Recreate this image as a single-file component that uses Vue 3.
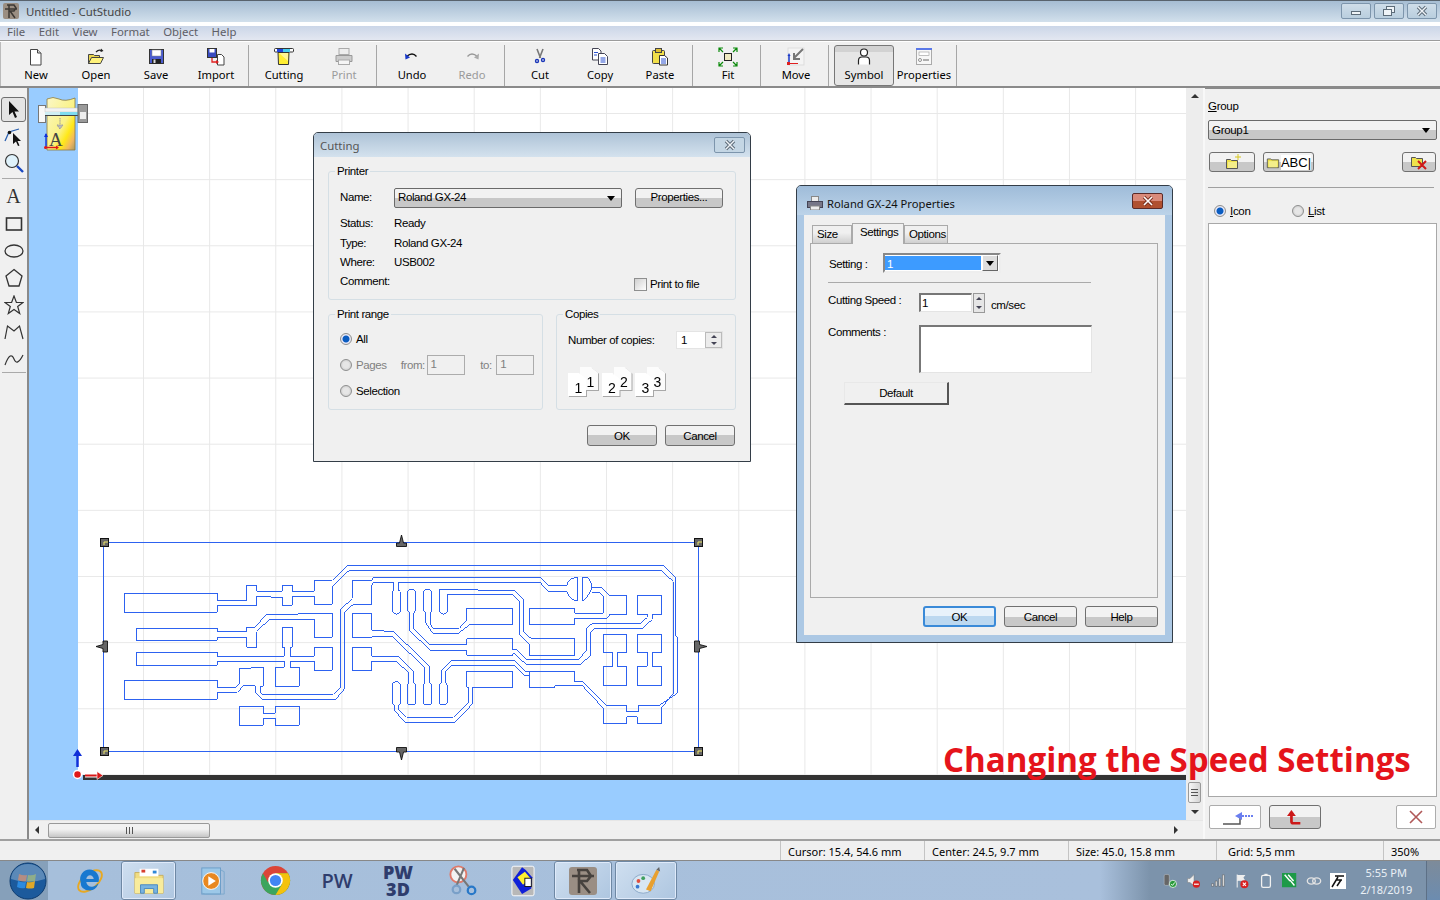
<script setup>
const menus = ["File", "Edit", "View", "Format", "Object", "Help"];

const toolGroups = [
  [{ id: "new", label: "New" }, { id: "open", label: "Open" }, { id: "save", label: "Save" }, { id: "import", label: "Import" }],
  [{ id: "cutting", label: "Cutting" }, { id: "print", label: "Print", off: true }],
  [{ id: "undo", label: "Undo" }, { id: "redo", label: "Redo", off: true }],
  [{ id: "cut", label: "Cut" }, { id: "copy", label: "Copy" }, { id: "paste", label: "Paste" }],
  [{ id: "fit", label: "Fit" }],
  [{ id: "move", label: "Move" }],
  [{ id: "symbol", label: "Symbol", active: true }, { id: "props", label: "Properties" }],
];

const icons = {
  new: '<path d="M4.5 2.5h7l3.500 3.500v12h-10.500z" fill="#fff" stroke="#444"/><path d="M11.5 2.500v3.500h3.500" fill="#ddd" stroke="#444"/>',
  open: '<path d="M2.5 16.5v-9h5l1 1h5v8z" fill="#e8d44c" stroke="#444"/><path d="M2.5 16.5l3-6h12l-3 6z" fill="#fff27a" stroke="#444"/><path d="M10 5q3-3 6-1" fill="none" stroke="#222" stroke-width="1.3"/><path d="M15 1.5l2.5 2.5-3 1z" fill="#222"/>',
  save: '<rect x="3.5" y="2.5" width="14" height="14" fill="#4a5cd0" stroke="#333"/><rect x="6" y="3" width="9" height="6" fill="#fff" stroke="#888" stroke-width=".5"/><rect x="6" y="12" width="9" height="4.5" fill="#222"/><rect x="7.5" y="12.5" width="2" height="3.5" fill="#ddd"/>',
  import: '<rect x="1.5" y="1.5" width="9" height="9" fill="#3a4cc0" stroke="#333"/><rect x="3.5" y="2" width="5" height="3.5" fill="#fff"/><path d="M11.5 7.5h4l2.5 2.5v8h-6.500z" fill="#fff" stroke="#444"/><path d="M6 11v4h5" fill="none" stroke="#e02020" stroke-width="1.300"/><path d="M10 13l3 2-3 2z" fill="#e02020"/>',
  cutting: '<path d="M4 5.500h11l-.5 12h-10z" fill="#ffee33" stroke="#333"/><path d="M5 6l9 8V6z" fill="#fff9c0" opacity=".7"/><rect x="0.500" y="1.500" width="19" height="3.500" rx="1" fill="#fff" stroke="#333"/><rect x="3" y="2" width="13" height="3" fill="#2244dd"/><rect x="9" y="2" width="7" height="3" fill="#44ccee"/>',
  print: '<rect x="5" y="1.500" width="10" height="6" fill="#eee" stroke="#aaa"/><path d="M2 8.500h16v6H2z" fill="#ccc" stroke="#999"/><rect x="4.500" y="13" width="11" height="4.500" fill="#f5f5f5" stroke="#aaa"/>',
  undo: '<path d="M4.500 9.500q6-5 10 0" fill="none" stroke="#111" stroke-width="1.300"/><path d="M3 6.500l.5 6 4.500-2z" fill="#1838c8"/>',
  redo: '<path d="M15.500 9.500q-6-5-10 0" fill="none" stroke="#999" stroke-width="1.300"/><path d="M17 6.500l-.5 6-4.500-2z" fill="#aaa"/>',
  cut: '<path d="M7 2l3.500 9M13 2l-3.500 9" stroke="#777" stroke-width="1.600"/><circle cx="7" cy="14" r="2.200" fill="#1a36b8"/><circle cx="13" cy="13" r="2.200" fill="#1a36b8"/><circle cx="7" cy="14" r=".8" fill="#fff"/><circle cx="13" cy="13" r=".8" fill="#fff"/>',
  copy: '<path d="M2.500 1.500h6l2.500 2.500v9h-8.500z" fill="#fff" stroke="#445"/><path d="M8.500 6.500h6l3 3v8h-9z" fill="#fff" stroke="#445"/><path d="M4 5.500h4M4 8h3M10.500 11h5M10.500 13h5M10.500 15h5" stroke="#2a50d0"/>',
  paste: '<rect x="2.500" y="3.500" width="12" height="13" rx="1" fill="#f2e04a" stroke="#444"/><rect x="5.500" y="1.500" width="6" height="4" fill="#e0c030" stroke="#444"/><path d="M9.500 8.500h5l3 2.500v7h-8z" fill="#fff" stroke="#333"/><path d="M11 12h5M11 14h5M11 16h5" stroke="#2a50d0"/>',
  fit: '<rect x="6.500" y="6.500" width="7" height="7" fill="#efe9c0" stroke="#222"/><g fill="none" stroke="#0a8a0a" stroke-width="1.200"><path d="M1 5V1h4M1 1l4 4M19 5V1h-4M19 1l-4 4M1 15v4h4M1 19l4-4M19 15v4h-4M19 19l-4-4"/></g>',
  move: '<rect x="2" y="1" width="16" height="17" fill="#f4f4f4" stroke="#ddd"/><path d="M17 2L8 11M8 6v6h6" fill="none" stroke="#777" stroke-width="2"/><path d="M3 8v7" stroke="#1838c8" stroke-width="1.500"/><path d="M1.500 9L3 6l1.500 3z" fill="#1838c8"/><rect x="1" y="15" width="3" height="3" fill="#e02020"/><path d="M4 16.500h8" stroke="#e02020"/>',
  symbol: '<circle cx="10" cy="5.500" r="3.500" fill="#fff" stroke="#222" stroke-width="1.200"/><path d="M4.500 17.500v-4q0-3.500 3.500-3.500h4q3.500 0 3.500 3.500v4" fill="#fff" stroke="#222" stroke-width="1.200"/>',
  props: '<rect x="2.500" y="1.500" width="15" height="16" fill="#f7f7f7" stroke="#aaa"/><rect x="2" y="1" width="16" height="2" fill="#5a78e8"/><rect x="5" y="5" width="10" height="3.500" fill="#fff" stroke="#999" stroke-width=".6"/><circle cx="6" cy="13" r="1.500" fill="#fff" stroke="#666" stroke-width=".7"/><path d="M9 13h6" stroke="#666"/>',
  arrow: '<path d="M5 1v14l3.500-3 2.500 6 2-1-2.500-5.500H15z" fill="#111"/>',
  node: '<path d="M1 15L5 6l10-3" fill="none" stroke="#2a60b0" stroke-width="1.300"/><circle cx="5.500" cy="6.500" r="1.800" fill="#111"/><path d="M9 7v11l3-2.500 2 4.500 1.500-.5-2-4.500h3.500z" fill="#111"/>',
  zoom: '<circle cx="8" cy="8" r="6.500" fill="#dff2fb" stroke="#333" stroke-width="1.200"/><path d="M13 13l6 6" stroke="#1a48c0" stroke-width="2.400"/>',
  rect: '<rect x="2.500" y="4" width="15" height="12" fill="none" stroke="#333" stroke-width="1.600"/>',
  ellipse: '<ellipse cx="10" cy="10" rx="9" ry="6" fill="none" stroke="#333" stroke-width="1.300"/>',
  pentagon: '<path d="M10 1.500l8 6.500-3 10H5L2 8z" fill="none" stroke="#333" stroke-width="1.300"/>',
  star: '<path d="M10 1l2.400 6.500h6.600l-5.300 4 2 7L10 14.500 4.300 18.500l2-7-5.300-4h6.600z" fill="none" stroke="#333" stroke-width="1.200"/>',
  poly: '<path d="M1 17L3.500 4l6.500 5 5.500-5L19 17" fill="none" stroke="#333" stroke-width="1.200"/>',
  curve: '<path d="M1 16C5 5 8 5 10 10s5 4 9-4" fill="none" stroke="#333" stroke-width="1.200"/>',
};

const drawTools = ["arrow", "node", "zoom", "sep", "text", "rect", "ellipse", "pentagon", "star", "poly", "curve"];

const pcbLeft = [
  "M712 151H658V184H592V166H562V184H485V166H455V211H367V190H88V247H367V226H485V199H525L527 202H562V226H592V199H658V223H712V169L745 136L763 121H885",
  "M712 151L757 106H885",
  "M367 295H124V331H367V322H455V352H485V305L523 268H658V322H712V250H612L610 253H514L480 292H455V304H367Z",
  "M562 292H592V352H586V379H658V352H712V421H658V394H586V412H613V469H541V412H568V394H367V406H124V367H367V379H568V352H562Z",
  "M885 142H836L830 151H772V205L736 240V472L715 493H502L497 487V469H505V412H469V415H433V462L423 472H367V451H88V508H367V487H427L445 468H481V487L502 508H722L750 475V245L775 223H830V166L836 157H885",
  "M772 250H830V301H864L868 304H885M772 250V322H830L836 319H885",
  "M772 352H830V379H885M772 352V421H830V394H885",
  "M433 529H505V550H541V529H613V586H541V565H505V586H433Z",
];

const pcbRight = [
  "M0 106H820L858 143V318L862 320V490L808 526H745V545H710V526H648L578 455H555V424H418V472H495V468H578L640 535V580H710V560H742V580H815V533L850 490V155L815 122H0",
  "M0 142H450L478 168H530Q531 145 563 142V212Q540 212 530 185H475L450 157H25V180L31 185V245Q19 260 7 245V185L10 180V157H0",
  "M577 142H590Q605 150 605 175Q590 210 577 212Z",
  "M605 172H635L658 196H710V253H660L650 265H555V283H418V235H555V250H640V198L628 187H605",
  "M150 178H262L265 181H372L400 208V305L425 327H555V376H418V343L388 312V215L370 195H172V245Q160 260 148 245V185Z",
  "M100 185Q112 170 125 185V240L122 248V285L130 295H208L230 270V235H368V283H240L205 310H128L108 280V248L100 240Z",
  "M52 185Q65 170 78 185V240L72 248V297L120 345H230V327H368V360H380L410 390H565L590 360V295L605 282H678L680 280H752L772 262V253H742V196H815V253H787V268L757 296H612L603 305V375L572 403H408L375 372H368V376H230V361H120L58 300V248L52 240Z",
  "M0 379H25L72 425V458L78 465V520Q65 530 52 520V465L57 458V430L20 394H0",
  "M0 304H10L118 408V458L125 465V520Q112 530 100 520V465L105 458V415L8 319H0",
  "M418 424H405L375 393H183L155 422V458L148 465V520Q160 530 172 520V465L167 458V425L183 408H375L405 438H418",
  "M7 462V520L13 527V541L45 577H195L247 522V472H368V424H230V472H235V517L190 562H50L25 537V527L31 520V462Q19 448 7 462Z",
  "M640 313H710V367H682V409H710V466H640V409H668V367H640Z",
  "M742 313H815V367H787V409H815V466H742V409H772V367H742Z",
];

const handles = [[100, 538], [694, 538], [100, 747], [694, 747]];

const statusCells = [
  { text: "Cursor: 15.4, 54.6 mm", width: 144 },
  { text: "Center: 24.5, 9.7 mm", width: 144 },
  { text: "Size: 45.0, 15.8 mm", width: 148 },
  { text: "Grid: 5,5 mm", width: 167 },
  { text: "350%", width: 57 },
];

const copyPages = [1, 2, 3];
</script>

<template>
  <div class="screen">
    <header class="titlebar">
      <svg class="app-icon" viewBox="0 0 16 16"><rect width="16" height="16" rx="2" fill="#9a8e82" /><path d="M4 2h7l2 3-2 3H7l5 7M6 2v13M2 6h12" fill="none" stroke="#3c3834" stroke-width="1.500" /></svg>
      <span class="title-text">Untitled - CutStudio</span>
      <div class="win-btns">
        <span class="win-btn"><i class="glyph-min"></i></span>
        <span class="win-btn">
          <svg viewBox="0 0 14 12"><rect x="4.500" y="1.500" width="8" height="6" fill="#eef3f7" stroke="#5d6c79" /><rect x="1.500" y="4.500" width="8" height="6" fill="#eef3f7" stroke="#5d6c79" /></svg>
        </span>
        <span class="win-btn">
          <svg viewBox="0 0 14 12"><path d="M3 2l8 8M11 2l-8 8" stroke="#5d6c79" stroke-width="3.400" /><path d="M3 2l8 8M11 2l-8 8" stroke="#f0f4f8" stroke-width="1.400" /></svg>
        </span>
      </div>
    </header>
    <nav class="menubar">
      <span v-for="m in menus" :key="m">{{ m }}</span>
    </nav>
    <div class="toolbar">
      <div v-for="(group, i) in toolGroups" :key="i" class="tool-group">
        <div v-for="t in group" :key="t.id" class="tool" :class="{ active: t.active, off: t.off }">
          <svg class="tool-icon" viewBox="0 0 20 20" v-html="icons[t.id]"></svg>
          <span>{{ t.label }}</span>
        </div>
      </div>
    </div>

    <main class="workspace">
      <aside class="drawbar">
        <template v-for="d in drawTools" :key="d">
          <div v-if="d === 'sep'" class="draw-sep"></div>
          <div v-else class="draw-tool" :class="{ active: d === 'arrow' }">
            <span v-if="d === 'text'" class="draw-a">A</span>
            <svg v-else viewBox="0 0 20 20" v-html="icons[d]"></svg>
          </div>
        </template>
        <div class="draw-sep last"></div>
      </aside>

      <section class="canvas-col">
        <div class="canvas-row">
          <div class="canvas">
            <div class="paper"></div>
            <svg class="pcb" viewBox="0 0 1157 733">
              <g transform="translate(-29 -88)">
                <g shape-rendering="crispEdges">
                  <path d="M103.500 542.500H698.500V751.500H103.500Z" fill="none" stroke="#2d62f0" />
                  <g transform="translate(95 530) scale(.33333)" fill="none" stroke="#2d62f0" stroke-width="3">
                    <path v-for="(d, i) in pcbLeft" :key="i" :d="d" />
                  </g>
                  <g transform="translate(390 530) scale(.33333)" fill="none" stroke="#2d62f0" stroke-width="3">
                    <path v-for="(d, i) in pcbRight" :key="i" :d="d" />
                  </g>
                </g>
                <g v-for="h in handles" :key="h[0] + '-' + h[1]">
                  <rect :x="h[0] + .5" :y="h[1] + .5" width="8" height="8" fill="#666" stroke="#111" />
                  <path :d="`M${h[0] + 4} ${h[1] + 7}v-3h4`" fill="none" stroke="#f0e868" />
                </g>
                <path d="M401.500 535l-2 8h-3v3.500h10v-3.500h-3z" fill="#666" stroke="#111" stroke-width=".9" />
                <path d="M401.500 760l-2-8h-3v-4.500h10v4.500h-3z" fill="#666" stroke="#111" stroke-width=".9" />
                <path d="M96 646.500l7-2v-3.500h4.500v11h-4.500v-3.500z" fill="#666" stroke="#111" stroke-width=".9" />
                <path d="M707 646.500l-7.500-2v-3.500h-5v11h5v-3.500z" fill="#666" stroke="#111" stroke-width=".9" />
                <path d="M77.500 767v-14" stroke="#1030d8" stroke-width="2.500" />
                <path d="M73 756l4.500-7 4.500 7z" fill="#1030d8" />
                <circle cx="77.500" cy="774.500" r="4" fill="#e01818" stroke="#fff" stroke-width="1.500" />
                <path d="M85 775.500h13" stroke="#fff" stroke-width="4" />
                <path d="M85 775.500h13" stroke="#d81818" stroke-width="2" />
                <path d="M97 771.500l6 4-6 4z" fill="#d81818" stroke="#fff" stroke-width=".6" />
              </g>
            </svg>
            <svg class="plotter" viewBox="0 0 50 54">
              <defs>
                <linearGradient id="sheetFill" x1="0" y1="0" x2="1" y2="1">
                  <stop offset="0" stop-color="#fbf7c8" />
                  <stop offset=".55" stop-color="#faf286" />
                  <stop offset=".72" stop-color="#ffe818" />
                  <stop offset=".86" stop-color="#f2b860" />
                  <stop offset="1" stop-color="#a89860" />
                </linearGradient>
              </defs>
              <path d="M9 2q6-3 12 0t16-1v52H9z" fill="url(#sheetFill)" stroke="#8a7a40" stroke-width=".8" />
              <rect x="0.500" y="8.500" width="7" height="17" fill="#f8f8f8" stroke="#777" />
              <rect x="7" y="11" width="33" height="4" fill="#f2f2f2" stroke="#bbb" stroke-width=".4" />
              <rect x="22" y="15" width="18" height="3" fill="#7fdcf0" />
              <rect x="7" y="15" width="15" height="3" fill="#cfeef4" />
              <rect x="7" y="18" width="33" height="1" fill="#444" />
              <rect x="40" y="7.500" width="9.500" height="18" fill="#9a9a9a" stroke="#666" />
              <rect x="42" y="15" width="6" height="7" fill="#eee" />
              <path d="M22 21v6M19 28h6l-3 4z" fill="#bbb" stroke="#999" stroke-dasharray="1.500 .7" />
              <path d="M8 37v14" stroke="#1030d8" stroke-width="1.400" />
              <path d="M6 40l2-4 2 4z" fill="#1030d8" />
              <path d="M7 50.500h13" stroke="#e01818" stroke-width="1.500" />
              <circle cx="7.500" cy="50.500" r="1.500" fill="#e01818" />
              <path d="M18 48.500l3 2-3 2z" fill="#e01818" />
            </svg>
            <span class="plotter-a">A</span>
          </div>
          <div class="vscroll">
            <span class="arr-up"></span>
            <span class="vthumb"><i></i></span>
            <span class="arr-down"></span>
          </div>
        </div>
        <div class="hscroll">
          <span class="arr-left"></span>
          <span class="hthumb"><i></i></span>
          <span class="arr-right"></span>
        </div>
      </section>

      <aside class="sidepanel">
        <label class="side-label"><u>G</u>roup</label>
        <div class="aero-select side-select"><span>Group1</span><b class="caret"></b></div>
        <div class="side-btns">
          <button class="aero-btn sb-new">
            <svg viewBox="0 0 16 16"><path d="M1.500 5.500h4l1 1h6v8h-11z" fill="#efe24a" stroke="#555" /><path d="M3 8h9v6H3z" fill="#f4ee8a" /><path d="M13 0v6M10 3h6" stroke="#d8c820" /></svg>
          </button>
          <button class="aero-btn sb-rename">
            <svg viewBox="0 0 16 16"><path d="M1.500 4.500h4l1 1h8v9h-13z" fill="#efe24a" stroke="#555" /><path d="M3 7h10v7H3z" fill="#f4ee8a" /></svg>
            <span class="abc">ABC|</span>
          </button>
          <button class="aero-btn sb-del">
            <svg viewBox="0 0 18 16"><path d="M1.500 3.500h4l1 1h6v8h-11z" fill="#efe24a" stroke="#555" /><path d="M8 7l8 8M16 7l-8 8" stroke="#d01818" stroke-width="2" /></svg>
          </button>
        </div>
        <hr class="side-line" />
        <div class="side-radios">
          <span class="radio-row icon-opt"><i class="radio on"></i><span><u>I</u>con</span></span>
          <span class="radio-row"><i class="radio"></i><span><u>L</u>ist</span></span>
        </div>
        <div class="symbol-list"></div>
        <div class="side-foot">
          <button class="flat-btn">
            <svg viewBox="0 0 40 16"><path d="M8 15h17V7" fill="none" stroke="#555" stroke-width="1.500" /><path d="M20 7l7-4v8z" fill="#6a7ef0" /><path d="M27 7h11" stroke="#6a7ef0" stroke-width="2" stroke-dasharray="2 1" /></svg>
          </button>
          <button class="aero-btn foot-up">
            <svg viewBox="0 0 20 18"><path d="M6 8v6q0 2 2 2h8" fill="none" stroke="#cc1818" stroke-width="3" /><path d="M1 8l5-7 5 7z" fill="#cc1818" /></svg>
          </button>
          <button class="flat-btn foot-x">
            <svg viewBox="0 0 14 14"><path d="M1 1l12 12M13 1L1 13" stroke="#b05858" stroke-width="1.600" /></svg>
          </button>
        </div>
      </aside>
    </main>

    <footer class="statusbar">
      <span v-for="c in statusCells" :key="c.text" class="status-cell" :style="{ width: c.width + 'px' }">{{ c.text }}</span>
    </footer>

    <div class="taskbar">
      <svg class="orb" viewBox="0 0 38 38">
        <circle cx="19" cy="19" r="18" fill="#1c5a9c" stroke="#0e3c70" />
        <path d="M10 12q4 2 8 1l-1 6q-4 1-8-1z" fill="#c0623a" />
        <path d="M19 13q4 1 8-1l-1 7q-4 1-8 0z" fill="#7a9c48" />
        <path d="M9 19q4 2 8 1l-1 6q-4 1-8-1z" fill="#2b8ae0" />
        <path d="M18 20q4 1 8-1l-1 7q-4 1-8 0z" fill="#e0a828" />
        <path d="M2 17a17 15 0 0 1 34 0q-17 6-34 0z" fill="#a8c4dc" opacity=".45" />
      </svg>
      <div class="task-slot ie">
        <svg viewBox="0 0 34 34"><ellipse cx="17" cy="17" rx="15" ry="8" transform="rotate(-40 17 17)" fill="none" stroke="#e8a820" stroke-width="2" /><path d="M7 18a10 10 0 1 1 19 0H13q1 5 6 5 4 0 6-3h1q-3 7-9 7-10 0-10-9zm6-3h8q-1-4-4-4t-4 4z" fill="#1878d0" /></svg>
      </div>
      <div class="task-slot active folder">
        <svg viewBox="0 0 34 34"><path d="M2 8h12l2 3h16v19H2z" fill="#f0dc82" stroke="#c8b060" /><rect x="7" y="4" width="20" height="8" fill="#fff" /><rect x="9" y="5" width="4" height="3" fill="#d84030" /><rect x="21" y="6" width="4" height="3" fill="#3088d8" /><path d="M2 14h30v16H2z" fill="#f8ec9c" /><path d="M8 30v-9h18v9h-4v-5H12v5z" fill="#78b4e0" stroke="#4a88c0" /></svg>
      </div>
      <div class="task-slot wmp">
        <svg viewBox="0 0 30 34"><rect x="3" y="3" width="20" height="28" fill="#9cc8e8" stroke="#6a9cc8" /><path d="M23 5l4 2v24h-20l-4-1" fill="none" stroke="#7aa8cc" /><circle cx="13" cy="17" r="9" fill="#e88820" stroke="#fff" /><path d="M10 12l8 5-8 5z" fill="#fff" /></svg>
      </div>
      <div class="task-slot chrome">
        <svg viewBox="0 0 32 32"><circle cx="16" cy="16" r="15" fill="#db4437" /><path d="M16 16L3 23.500A15 15 0 0 1 3 8.500L9.500 20z" fill="#3ba55d" /><path d="M3 23.500A15 15 0 0 0 16 31a15 15 0 0 0 13-22.500H16z" fill="#3ba55d" /><path d="M16 31a15 15 0 0 0 13-22.500H16l6.500 11.500z" fill="#f4c20d" /><circle cx="16" cy="16" r="7.500" fill="#fff" /><circle cx="16" cy="16" r="5.800" fill="#4285f4" /></svg>
      </div>
      <div class="task-slot pw"><span>PW</span></div>
      <div class="task-slot pw3d"><span>PW 3D</span></div>
      <div class="task-slot snip">
        <svg viewBox="0 0 34 34"><circle cx="11" cy="10" r="8.500" fill="#f2f2f2" stroke="#e07a6a" stroke-width="2" /><path d="M7 4l15 19M17 3L9 22" stroke="#777" stroke-width="2.200" /><circle cx="25" cy="27" r="4" fill="none" stroke="#2878c8" stroke-width="2.400" /><circle cx="9" cy="26" r="4" fill="none" stroke="#7aa0c8" stroke-width="2.400" /></svg>
      </div>
      <div class="task-slot cstudio">
        <svg viewBox="0 0 26 34"><rect x="1" y="1" width="24" height="32" rx="2" fill="#b8b8b8" stroke="#fff" /><path d="M2 16L12 2l4 3 7 8-1 12-10 6z" fill="#1020d8" /><path d="M7 13l8-6 6 7-8 7z" fill="#fff030" /><rect x="15" y="14" width="7" height="9" fill="#fff" stroke="#111" /></svg>
      </div>
      <div class="task-slot active rl">
        <svg viewBox="0 0 28 28"><rect width="28" height="28" rx="3" fill="#9a8e84" /><path d="M8 3h10l4 6-4 5h-7l10 12M10 3v23M3 9h22" fill="none" stroke="#47423e" stroke-width="2.600" /></svg>
      </div>
      <div class="task-slot active paint">
        <svg viewBox="0 0 34 34"><ellipse cx="14" cy="20" rx="12" ry="10" fill="#d8e6f2" stroke="#8aa8c8" /><circle cx="9" cy="17" r="2" fill="#e05040" /><circle cx="14" cy="14" r="2" fill="#40a060" /><circle cx="8" cy="23" r="2" fill="#3878d0" /><path d="M17 26L28 5l3 2-9 21z" fill="#e8a030" /><path d="M28 5l3-3 1 5z" fill="#666" /></svg>
      </div>

      <div class="tray">
        <svg viewBox="0 0 22 20" class="tray-i"><rect x="3" y="1" width="7" height="15" rx="2" fill="#666" stroke="#ddd" stroke-width=".5" /><circle cx="15" cy="14" r="5" fill="#2a9a3a" stroke="#fff" /><path d="M12.500 14l2 2 3-4" fill="none" stroke="#fff" stroke-width="1.300" /></svg>
        <svg viewBox="0 0 20 20" class="tray-i"><path d="M2 7h3l5-5v14l-5-4H2z" fill="#eee" stroke="#777" stroke-width=".6" /><circle cx="13" cy="14" r="4.500" fill="#d82020" /><path d="M10 14h6" stroke="#fff" stroke-width="1.500" /></svg>
        <svg viewBox="0 0 18 18" class="tray-i"><path d="M2 15h2v-3H2zM6 15h2v-6H6zM10 15h2V6h-2zM14 15h2V2h-2z" fill="#eee" stroke="#555" stroke-width=".6" /></svg>
        <svg viewBox="0 0 18 20" class="tray-i"><path d="M3 2v16M3 3h9l-2 3 2 3H3" fill="#eee" stroke="#eee" stroke-width="1.300" /><circle cx="12" cy="14" r="5" fill="#d82020" /><path d="M10 12l4 4M14 12l-4 4" stroke="#fff" stroke-width="1.300" /></svg>
        <svg viewBox="0 0 14 20" class="tray-i"><rect x="1.500" y="3" width="11" height="15" rx="2" fill="none" stroke="#f0f0f0" stroke-width="1.600" /><rect x="5" y="1" width="4" height="2" fill="#f0f0f0" /></svg>
        <svg viewBox="0 0 18 18" class="tray-i"><rect width="16" height="16" fill="#1e9a48" /><path d="M3 2l6 7M7 2l6 7M9 8l5 6" stroke="#fff" stroke-width="1.600" /></svg>
        <svg viewBox="0 0 18 14" class="tray-i"><ellipse cx="6" cy="7" rx="4.500" ry="3.500" fill="none" stroke="#e4e4e4" stroke-width="1.500" /><ellipse cx="12" cy="7" rx="4.500" ry="3.500" fill="none" stroke="#e4e4e4" stroke-width="1.500" /></svg>
        <svg viewBox="0 0 16 16" class="tray-i"><rect width="16" height="16" fill="#fff" /><path d="M2 14L8 4M5 3h9M6 7h6M7 13l4-6" stroke="#111" stroke-width="1.500" /></svg>
      </div>
      <div class="clock"><span>5:55 PM</span><span>2/18/2019</span></div>
      <div class="show-desktop"></div>
    </div>

    <!-- floating windows -->
    <section class="dlg cutting">
      <div class="dlg-title">
        <span>Cutting</span>
        <span class="dlg-close">
          <svg viewBox="0 0 14 12"><path d="M3 2l8 8M11 2l-8 8" stroke="#5d6c79" stroke-width="3.400" /><path d="M3 2l8 8M11 2l-8 8" stroke="#f0f4f8" stroke-width="1.400" /></svg>
        </span>
      </div>
      <div class="dlg-body">
        <fieldset class="gbox printer-box">
          <legend>Printer</legend>
          <div class="info-row name-row">
            <span>Name:</span>
            <div class="aero-select name-select"><span>Roland GX-24</span><b class="caret"></b></div>
            <button class="aero-btn props-btn">Properties...</button>
          </div>
          <div class="info-row"><span>Status:</span><span>Ready</span></div>
          <div class="info-row"><span>Type:</span><span>Roland GX-24</span></div>
          <div class="info-row"><span>Where:</span><span>USB002</span></div>
          <div class="info-row comment-row">
            <span>Comment:</span>
            <span class="to-file"><i class="check"></i>Print to file</span>
          </div>
        </fieldset>
        <div class="box-row">
          <fieldset class="gbox range-box">
            <legend>Print range</legend>
            <div class="radio-row"><i class="radio on"></i><span>All</span></div>
            <div class="radio-row disabled pages-row">
              <i class="radio"></i><span class="pages-label">Pages</span>
              <span class="from">from:</span><span class="num-field">1</span>
              <span class="to">to:</span><span class="num-field">1</span>
            </div>
            <div class="radio-row"><i class="radio"></i><span>Selection</span></div>
          </fieldset>
          <fieldset class="gbox copies-box">
            <legend>Copies</legend>
            <div class="copies-row">
              <span>Number of copies:</span>
              <div class="spin-field"><span>1</span><i><b></b><b class="down"></b></i></div>
            </div>
            <div class="collate">
              <div v-for="n in copyPages" :key="n" class="page-pair">
                <span class="sheet back">{{ n }}</span>
                <span class="sheet front">{{ n }}</span>
              </div>
            </div>
          </fieldset>
        </div>
        <div class="dlg-actions">
          <button class="aero-btn">OK</button>
          <button class="aero-btn">Cancel</button>
        </div>
      </div>
    </section>

    <section class="dlg gx24">
      <div class="gx-title">
        <svg viewBox="0 0 16 14"><rect x="4.500" y="0.500" width="7" height="5" fill="#eee" stroke="#888" /><rect x="0.500" y="5.500" width="15" height="6" fill="#778" stroke="#445" /><rect x="3.500" y="10" width="9" height="4" fill="#eee" stroke="#888" /></svg>
        <span>Roland GX-24 Properties</span>
        <span class="gx-close">
          <svg viewBox="0 0 14 12"><path d="M3 2l8 8M11 2l-8 8" stroke="#7a3020" stroke-width="3.400" /><path d="M3 2l8 8M11 2l-8 8" stroke="#fff" stroke-width="1.600" /></svg>
        </span>
      </div>
      <div class="gx-body">
        <div class="tabs">
          <span class="tab tab-size">Size</span>
          <span class="tab current">Settings</span>
          <span class="tab tab-opts">Options</span>
        </div>
        <div class="tab-page">
          <div class="set-row">
            <span class="set-label">Setting :</span>
            <div class="combo"><span>1</span><b><i class="caret"></i></b></div>
          </div>
          <hr class="set-line" />
          <div class="speed-row">
            <span class="speed-label">Cutting Speed :</span>
            <span class="sunken speed-input">1</span>
            <span class="mini-spin"><b></b><b class="down"></b></span>
            <span class="unit">cm/sec</span>
          </div>
          <div class="comment-block">
            <span class="speed-label">Comments :</span>
            <span class="sunken comment-input"></span>
          </div>
          <button class="raised-btn">Default</button>
        </div>
        <div class="gx-actions">
          <button class="aero-btn focus">OK</button>
          <button class="aero-btn">Cancel</button>
          <button class="aero-btn">Help</button>
        </div>
      </div>
    </section>

    <div class="caption">Changing the Speed Settings</div>
  </div>
</template>

<style>
html, body { margin: 0; padding: 0; background: #f0f0f0; }
</style>

<style scoped>
* { box-sizing: border-box; }
.screen {
  position: relative; width: 1440px; height: 900px; overflow: hidden;
  display: flex; flex-direction: column; background: #f0f0f0;
  font-family: "Liberation Sans", Arial, sans-serif; font-size: 12px; color: #000;
}
button { font: inherit; color: inherit; letter-spacing: inherit; padding: 0; }

/* title + menu */
.titlebar {
  height: 22px; flex: none; display: flex; align-items: center; padding: 0 0 1px 3px;
  border-top: 1px solid #59636d;
  background: linear-gradient(#a6bdd3, #d2e0ec);
}
.app-icon { width: 16px; height: 16px; }
.title-text { margin-left: 7px; font-family: "Noto Sans", sans-serif; font-size: 11.400px; color: #444; }
.win-btns { margin-left: auto; display: flex; gap: 3px; padding-right: 3px; }
.win-btn {
  width: 30px; height: 16px; border: 1px solid #7d95ac; border-radius: 2px;
  background: linear-gradient(#cfdde9, #b9cede); display: flex; align-items: center; justify-content: center;
}
.win-btn svg, .dlg-close svg, .gx-close svg { width: 14px; height: 12px; }
.glyph-min { width: 10px; height: 4px; border: 1px solid #5d6c79; background: #eef3f7; margin-top: 3px; }
.menubar {
  height: 19px; flex: none; display: flex; gap: 13.500px; padding: 0 0 2px 7px; align-items: center;
  border-top: 4px solid #fff; border-bottom: 1px solid #9c9c9c;
  background: linear-gradient(#cbd6e8, #e3e7f1);
  font-family: "Noto Sans", sans-serif; font-size: 11.400px; line-height: 14px; color: #5e5e66;
}
.toolbar {
  height: 47px; flex: none; display: flex; padding: 3px 0 0 6px;
  background: #f0f0f0; border-bottom: 2px solid #8a8a8a; border-top: 1px solid #fff;
  box-shadow: inset 4px 0 0 -3px #bbb;
}
.tool-group { display: flex; height: 41px; padding-right: 2px; margin-right: 5px; border-right: 1px solid #a6a6a6; }
.tool {
  width: 60px; display: flex; flex-direction: column; align-items: center;
  font-family: "Noto Sans", sans-serif; font-size: 11.200px; line-height: 16px;
}
.tool-icon { width: 20px; height: 20px; margin: 2px 0 0; }
.tool.off { color: #9a9a9a; }
.tool.active {
  border: 1px solid #777; border-radius: 3px;
  background: linear-gradient(#d2d2d2 0 6px, #e6e6e6 6px);
}
.tool.active .tool-icon { margin-top: 1px; }

/* main */
.workspace { flex: 1; min-height: 0; display: flex; }
.drawbar {
  width: 29px; flex: none; padding: 9px 0 0; border-right: 2px solid #8a8a8a; background: #f0f0f0;
  display: flex; flex-direction: column; align-items: center;
}
.draw-tool { width: 25px; height: 27px; display: flex; align-items: center; justify-content: center; flex: none; }
.draw-tool svg { width: 20px; height: 20px; }
.draw-tool.active { height: 25px; border: 1px solid #6f6f6f; border-radius: 3px; background: #e4e4e4; }
.draw-a { font-family: "Liberation Serif", serif; font-size: 20px; color: #333; }
.draw-sep { width: 24px; height: 4px; margin: 2px 0 1px; border-top: 1px solid #aaa; flex: none; }
.draw-sep.last { margin-top: 0; }

.canvas-col { width: 1174px; flex: none; display: flex; flex-direction: column; }
.canvas-row { flex: 1; min-height: 0; display: flex; }
.canvas { position: relative; width: 1157px; overflow: hidden; background: #99ccff; }
.paper {
  margin-left: 49px; height: 687px; background-color: #fff;
  background-image: linear-gradient(#e8e8e8 1px, transparent 1px), linear-gradient(90deg, #e8e8e8 1px, transparent 1px);
  background-size: 66.150px 66.150px; background-position: 65px 25px;
  box-shadow: 5px 5px 0 #333;
}
.pcb { position: absolute; left: 0; top: 0; width: 1157px; height: 733px; }
.plotter { position: absolute; left: 9px; top: 9px; width: 50px; height: 54px; }
.plotter-a { position: absolute; left: 20px; top: 42px; font-family: "Liberation Serif", serif; font-size: 19px; line-height: 19px; color: #444; }
.vscroll { flex: 1; background: #ededed; display: flex; flex-direction: column; align-items: center; position: relative; }
.arr-up, .arr-down { width: 0; height: 0; border: 4px solid transparent; }
.arr-up { border-bottom: 4px solid #333; margin-top: 2px; }
.vthumb {
  margin-top: auto; width: 13px; height: 21px; border: 1px solid #999; border-radius: 2px;
  background: linear-gradient(90deg, #f6f6f6, #d4d4d4); display: flex; align-items: center; justify-content: center;
}
.vthumb i { width: 7px; height: 7px; border-top: 1px solid #555; border-bottom: 1px solid #555; background: linear-gradient(#555,#555) center/7px 1px no-repeat; }
.arr-down { border-top: 4px solid #333; margin: 7px 0 2px; }
.hscroll { height: 19px; flex: none; background: #f0f0f0; display: flex; align-items: center; padding-left: 2px; border-top: 1px solid #e6e6e6; }
.arr-left, .arr-right { width: 0; height: 0; border: 4px solid transparent; }
.arr-left { border-right: 4px solid #333; }
.hthumb {
  margin-left: 9px; width: 162px; height: 15px; border: 1px solid #999; border-radius: 2px;
  background: linear-gradient(#f2f2f2 40%, #c6c6c6); display: flex; align-items: center; justify-content: center;
}
.hthumb i { width: 7px; height: 7px; border-left: 1px solid #555; border-right: 1px solid #555; background: linear-gradient(#555,#555) center/1px 7px no-repeat; }
.arr-right { margin-left: auto; margin-right: 21px; border-left: 4px solid #333; }

/* side panel */
.sidepanel {
  flex: 1; border-left: 2px solid #f8f8f8; padding: 11px 3px 0 3px;
  display: flex; flex-direction: column; box-shadow: inset 0 1px 0 #8a8a8a;
  font-size: 11.500px; letter-spacing: -.3px;
}
.side-label { line-height: 14px; }
.aero-select {
  display: flex; align-items: center; justify-content: space-between; border: 1px solid #6a6a6a; border-radius: 2px;
  background: linear-gradient(#f2f2f2 50%, #c8c8c8 50%); padding: 0 6px 0 3px;
}
.side-select { height: 20px; margin-top: 7px; }
.caret { width: 0; height: 0; border: 4px solid transparent; border-top: 5px solid #000; margin-top: 5px; flex: none; }
.side-btns { display: flex; margin-top: 12px; padding: 0 1px; }
.aero-btn {
  border: 1px solid #707070; border-radius: 3px; background: linear-gradient(#f2f2f2 50%, #c8c8c8 50%);
  display: flex; align-items: center; justify-content: center;
}
.sb-new { width: 46px; height: 20px; }
.sb-new svg { width: 16px; height: 16px; margin-left: 2px; }
.sb-rename { width: 51px; height: 20px; margin-left: 8px; gap: 1px; }
.sb-rename svg { width: 14px; height: 14px; }
.abc { background: #fff; font-size: 13px; line-height: 15px; letter-spacing: 0; }
.sb-del { width: 34px; height: 20px; margin-left: auto; }
.sb-del svg { width: 18px; height: 16px; }
.side-line { width: 226px; margin: 15px 0 0 0; border: 0; border-top: 1px solid #a0a0a0; height: 1px; }
.side-radios { display: flex; margin-top: 16px; padding-left: 6px; height: 14px; }
.icon-opt { width: 78px; }
.radio-row { display: flex; align-items: center; gap: 4px; }
.radio {
  width: 12px; height: 12px; border-radius: 50%; border: 1px solid #8e8f8f; flex: none;
  background: radial-gradient(circle, #e6e6e6 40%, #c0c0c0);
}
.radio.on { background: radial-gradient(circle, #0a5cc0 0 3px, #eef 4px, #d8d8d8 6px); }
.symbol-list { width: 229px; height: 574px; margin-top: 5px; background: #fff; border: 1px solid #a8a8a8; flex: none; }
.side-foot { display: flex; margin-top: 8px; padding-left: 1px; height: 24px; }
.flat-btn { width: 52px; height: 24px; border: 1px solid #acacac; border-radius: 2px; background: #fff; display: flex; align-items: center; justify-content: center; }
.flat-btn svg { width: 40px; height: 16px; }
.foot-up { width: 52px; height: 24px; margin-left: 8px; }
.foot-up svg { width: 18px; height: 16px; }
.foot-x { width: 40px; margin-left: auto; margin-right: 1px; }
.foot-x svg { width: 14px; height: 14px; }

/* status + taskbar */
.statusbar {
  height: 22px; flex: none; display: flex; padding-left: 780px;
  border-top: 2px solid #a0a0a0; border-bottom: 1px solid #888; background: #f0f0f0;
  font-family: "Noto Sans", sans-serif; font-size: 11px;
}
.status-cell { padding: 3px 0 0 7px; border-left: 1px solid #c4c4c4; white-space: nowrap; line-height: 15px; }
.status-cell:nth-child(4) { padding-left: 11px; }
.taskbar {
  height: 39px; flex: none; position: relative; display: flex; align-items: center;
  background: linear-gradient(90deg, #86a0ba 0 48px, #a6bfdb 48px, #a9c0dc 1100px, #7c93ab 1150px);
}
.orb { width: 38px; height: 38px; margin-left: 9px; flex: none; }
.task-slot { display: flex; align-items: center; justify-content: center; flex: none; height: 39px; }
.task-slot.active {
  border: 1px solid #6e88a4; border-radius: 3px;
  background: linear-gradient(135deg, #cfdff0, #aec6e0);
  box-shadow: inset 0 0 0 1px #dfeafa;
}
.ie { margin-left: 27px; width: 32px; }
.ie svg { width: 32px; height: 32px; }
.folder { margin-left: 15px; width: 55px; }
.folder svg { width: 32px; height: 32px; }
.wmp { margin-left: 21px; width: 32px; }
.wmp svg { width: 28px; height: 32px; }
.chrome { margin-left: 30px; width: 32px; }
.chrome svg { width: 31px; height: 31px; }
.pw { margin-left: 30px; width: 32px; font-family: "Open Sans", sans-serif; font-weight: 600; font-size: 20px; color: #2f3d6d; padding-bottom: 1px; }
.pw3d { margin-left: 29px; width: 32px; font-family: "Open Sans", sans-serif; font-weight: 800; font-size: 18px; line-height: 17px; color: #2f3d6d; text-align: center; }
.pw3d span { display: block; width: 32px; }
.snip { margin-left: 34px; width: 32px; }
.snip svg { width: 32px; height: 32px; }
.cstudio { margin-left: 27px; width: 32px; }
.cstudio svg { width: 24px; height: 32px; }
.rl { margin-left: 15px; width: 58px; }
.rl svg { width: 28px; height: 28px; }
.paint { margin-left: 3px; width: 62px; }
.paint svg { width: 32px; height: 32px; }
.tray { margin-left: 485px; display: flex; align-items: center; gap: 8px; width: 194px; }
.tray-i { width: 16px; height: 16px; flex: none; }
.clock {
  width: 90px; display: flex; flex-direction: column; align-items: center; gap: 2px;
  font-family: "Noto Sans", sans-serif; font-size: 11px; line-height: 15px; color: #eaf0f6;
}
.show-desktop { width: 15px; height: 39px; margin-left: auto; border-left: 1px solid #5d7086; background: linear-gradient(#7d8b9a, #6c8cb0); }

/* dialogs */
.dlg { position: absolute; background: #f0f0f0; border: 1px solid #333d47; border-radius: 5px 5px 0 0; font-size: 11.500px; letter-spacing: -.4px; }
.cutting { left: 313px; top: 132px; width: 438px; height: 330px; }
.dlg-title {
  height: 24px; display: flex; align-items: center; justify-content: space-between; padding: 0 5px 0 6px;
  background: linear-gradient(#aec3d7, #d4e2ee); border-radius: 4px 4px 0 0;
  font-family: "Noto Sans", sans-serif; font-size: 11.400px; letter-spacing: 0; color: #555;
}
.dlg-close {
  width: 31px; height: 16px; border: 1px solid #7d95ac; border-radius: 2px; background: #c4d6e4;
  display: flex; align-items: center; justify-content: center;
}
.dlg-body { padding: 7px 14px 0; }
.gbox { margin: 0; padding: 0; border: 1px solid #d5dfe5; border-radius: 3px; min-width: 0; }
.gbox legend { padding: 0 2px; margin-left: -5px; line-height: 14px; }
.printer-box { height: 136px; padding: 10px 12px 0 11px; }
.info-row { display: grid; grid-template-columns: 54px 1fr; line-height: 19.500px; }
.name-row { grid-template-columns: 54px 228px 88px; align-items: center; height: 20px; margin-bottom: 6px; }
.name-select { height: 20px; padding-left: 3px; }
.props-btn { height: 20px; margin-left: 13px; width: 88px; }
.comment-row { grid-template-columns: 294px 1fr; margin-top: -1px; }
.to-file { display: flex; align-items: center; gap: 3px; margin-top: 3px; }
.check { width: 13px; height: 13px; border: 1px solid #8e8f8f; background: linear-gradient(135deg, #d0d0d0, #fff); }
.box-row { display: flex; gap: 13px; margin-top: 7px; }
.range-box { width: 215px; height: 103px; padding: 8px 8px 0 11px; }
.range-box .radio-row { height: 26px; }
.range-box .radio-row:first-of-type { height: 20px; margin-bottom: 3px; }
.disabled { color: #808080; }
.pages-row { gap: 0; }
.pages-row .radio { margin-right: 4px; }
.pages-label { width: 45px; }
.from { width: 26px; }
.to { width: 16px; margin-left: 15px; }
.num-field { width: 39px; height: 20px; border: 1px solid #acacac; padding: 2px 3px; }
.num-field:last-child { width: 38px; }
.copies-box { width: 180px; height: 103px; padding: 9px 12px 0 11px; }
.copies-row { display: flex; align-items: center; justify-content: space-between; height: 19px; }
.spin-field { width: 47px; height: 18px; background: #fff; display: flex; justify-content: space-between; padding: 0 0 0 4px; line-height: 17px; border: 1px solid #e4e4e4; }
.spin-field i { width: 17px; display: flex; flex-direction: column; justify-content: space-around; align-items: center; border: 1px solid #bbb; background: #ececec; }
.spin-field b, .mini-spin b { width: 0; height: 0; border: 3px solid transparent; border-top: 0; border-bottom: 3px solid #445; display: block; }
.spin-field b.down, .mini-spin b.down { border-bottom: 0; border-top: 3px solid #445; }
.collate { display: flex; margin-top: 18px; height: 32px; letter-spacing: 0; }
.page-pair { position: relative; width: 33.500px; height: 32px; filter: drop-shadow(1px 1px 0 #a8a8a8); }
.sheet {
  position: absolute; background: #fff; width: 18px; height: 23px;
  font-size: 14px; line-height: 16px; display: flex; align-items: flex-end; justify-content: center; padding-left: 3px;
  clip-path: polygon(0 0, 60% 0, 100% 25%, 100% 100%, 0 100%);
}
.sheet.back { left: 12px; top: 0; background: #fcfcfc; }
.sheet.front { left: 0; top: 6px; }
.dlg-actions { display: flex; justify-content: flex-end; gap: 8px; margin: 15px 1px 0 0; }
.dlg-actions .aero-btn { width: 70px; height: 21px; }

.gx24 { left: 796px; top: 185px; width: 377px; height: 458px; background: #acc8e4; padding: 0 7px 7px; }
.gx-title {
  height: 29px; display: flex; align-items: center; gap: 4px; margin: 0 -7px; padding: 5px 9px 0 10px;
  font-family: "Noto Sans", sans-serif; font-size: 11.200px; letter-spacing: 0; color: #111;
  background: linear-gradient(#9fbcd9, #bcd3e9); border-radius: 4px 4px 0 0;
}
.gx-title svg { width: 16px; height: 14px; flex: none; }
.gx-title .gx-close svg { width: 14px; height: 12px; }
.gx-close {
  margin-left: auto; width: 31px; height: 16px; border: 1px solid #5a2a28; border-radius: 2px;
  background: linear-gradient(#d98a7a 50%, #b05030 50%);
  display: flex; align-items: center; justify-content: center; margin-top: -4px;
}
.gx-body { height: 420px; background: #f0f0f0; padding: 8px 7px 0 6px; }
.tabs { display: flex; align-items: flex-end; height: 20px; padding-left: 2px; position: relative; z-index: 1; }
.tab {
  height: 18px; padding: 1px 0 0 4px; line-height: 14px; border: 1px solid #aaa; border-bottom: 0;
  background: linear-gradient(#f0f0f0 40%, #cfcfcf);
}
.tab-size { width: 40px; }
.tab.current { height: 21px; width: 52px; padding: 1px 0 0 7px; background: #f0f0f0; margin-bottom: -1px; }
.tab-opts { width: 44px; }
.tab-page { height: 355px; border: 1px solid #aaa; padding: 9px 0 0 18px; }
.set-row { display: flex; align-items: center; height: 20px; }
.set-label { width: 54px; padding-top: 2px; }
.combo { width: 118px; height: 20px; border: 2px solid #888; border-bottom-color: #eee; border-right-color: #eee; background: #fff; display: flex; }
.combo span { width: 96px; background: #3d9bff; color: #fff; padding-left: 2px; line-height: 16px; margin: 1px 0; }
.combo b { width: 16px; margin-left: 1px; background: #ddd; border: 1px solid #666; border-top-color: #fff; border-left-color: #fff; display: flex; justify-content: center; align-items: center; }
.combo .caret { margin-top: 4px; }
.set-line { width: 263px; height: 1px; border: 0; border-top: 1px solid #aaa; margin: 9px 0 0 -1px; }
.speed-row { display: flex; height: 20px; margin: 10px 0 0 -1px; }
.speed-label { width: 91px; display: block; padding-top: 1px; }
.sunken { background: #fff; border: 2px solid #777; border-right: 1px solid #e4e4e4; border-bottom: 1px solid #e4e4e4; display: block; }
.speed-input { width: 53px; height: 19px; padding-left: 1px; line-height: 16px; }
.mini-spin { width: 12px; height: 20px; margin-left: 1px; display: flex; flex-direction: column; justify-content: space-around; align-items: center; border: 1px solid #999; background: #e6e6e6; }
.unit { margin: 6px 0 0 6px; }
.comment-block { display: flex; margin: 12px 0 0 -1px; }
.comment-input { width: 173px; height: 48px; }
.raised-btn {
  display: block; width: 105px; height: 23px; margin: 9px 0 0 15px; background: #f0f0f0;
  border: 1px solid #e8e8e8; border-right: 2px solid #555; border-bottom: 2px solid #555;
}
.gx-actions { display: flex; justify-content: flex-end; gap: 8px; margin-top: 8px; }
.gx-actions .aero-btn { width: 73px; height: 21px; }
.gx-actions .focus { border: 2px solid #3a8ad8; background: linear-gradient(#e8f2fb 50%, #bcd8f0 50%); }

.caption {
  position: absolute; left: 943px; top: 738px; white-space: nowrap;
  font-family: "Open Sans", sans-serif; font-weight: 700; font-size: 33.100px; line-height: 44px; color: #e5141b;
}
</style>
